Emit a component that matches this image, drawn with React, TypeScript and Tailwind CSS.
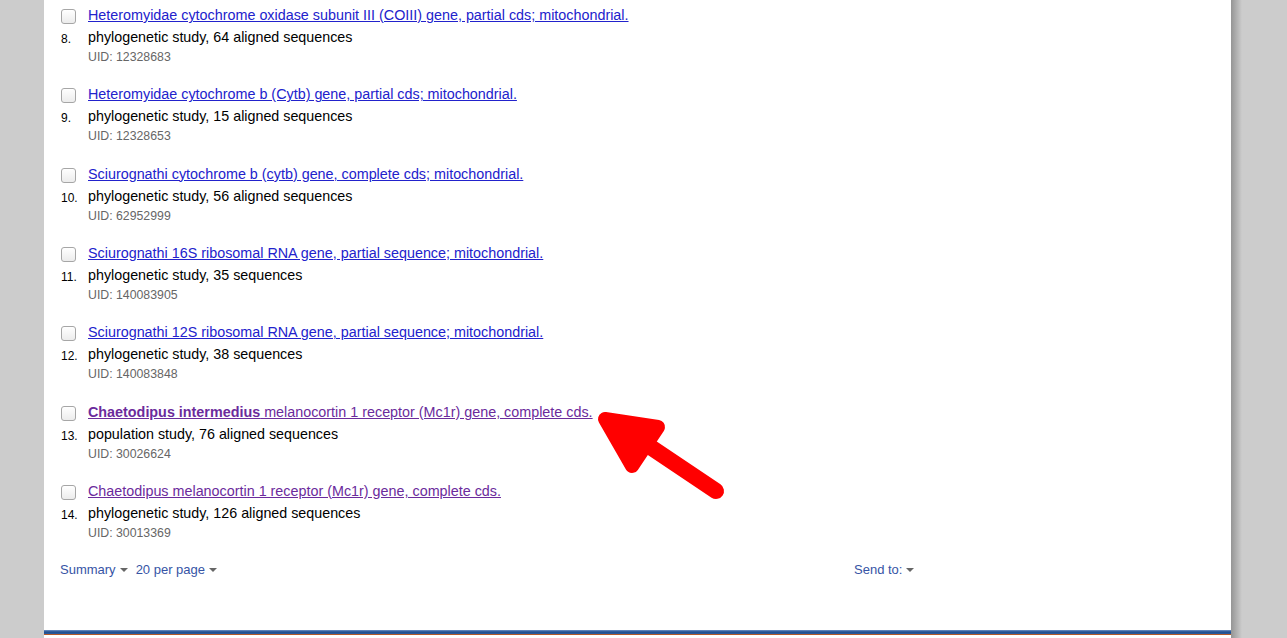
import React from "react";

type Rec = {
  n: number;
  title: React.ReactNode;
  desc: string;
  uid: string;
  visited?: boolean;
};

const recs: Rec[] = [
  { n: 8, title: "Heteromyidae cytochrome oxidase subunit III (COIII) gene, partial cds; mitochondrial.", desc: "phylogenetic study, 64 aligned sequences", uid: "12328683" },
  { n: 9, title: "Heteromyidae cytochrome b (Cytb) gene, partial cds; mitochondrial.", desc: "phylogenetic study, 15 aligned sequences", uid: "12328653" },
  { n: 10, title: "Sciurognathi cytochrome b (cytb) gene, complete cds; mitochondrial.", desc: "phylogenetic study, 56 aligned sequences", uid: "62952999" },
  { n: 11, title: "Sciurognathi 16S ribosomal RNA gene, partial sequence; mitochondrial.", desc: "phylogenetic study, 35 sequences", uid: "140083905" },
  { n: 12, title: "Sciurognathi 12S ribosomal RNA gene, partial sequence; mitochondrial.", desc: "phylogenetic study, 38 sequences", uid: "140083848" },
  {
    n: 13,
    title: (
      <>
        <b>Chaetodipus intermedius</b> melanocortin 1 receptor (Mc1r) gene, complete cds.
      </>
    ),
    desc: "population study, 76 aligned sequences",
    uid: "30026624",
    visited: true,
  },
  { n: 14, title: "Chaetodipus melanocortin 1 receptor (Mc1r) gene, complete cds.", desc: "phylogenetic study, 126 aligned sequences", uid: "30013369", visited: true },
];

function Caret() {
  return <span className="inline-block ml-[4px] mb-[2px] align-middle w-0 h-0 border-l-[4px] border-r-[4px] border-t-[4px] border-l-transparent border-r-transparent border-t-[#666]" />;
}

function Item({ r }: { r: Rec }) {
  return (
    <div className="flex h-[79.333px]">
      <div className="w-[27px] flex flex-col">
        <div className="mt-[4px] w-[15px] h-[15px] rounded-[3px] border border-[#a6a6a6] bg-gradient-to-b from-white to-[#ececec]" />
        <div className="mt-[8px] text-[12px] leading-[14px] text-black">{r.n}.</div>
      </div>
      <div className="flex flex-col">
        <a className={`text-[14.35px] leading-[20px] underline ${r.visited ? "text-[#6b2b9c]" : "text-[#2222cc]"}`}>{r.title}</a>
        <div className="mt-[2px] text-[14.3px] leading-[20px] text-black">{r.desc}</div>
        <div className="text-[12.3px] leading-[20px] text-[#666]">UID: {r.uid}</div>
      </div>
    </div>
  );
}

export default function App() {
  return (
    <div className="relative w-[1287px] h-[638px] overflow-hidden bg-[#cccccc] flex" style={{ fontFamily: '"Liberation Sans", Arial, sans-serif' }}>
      <div className="ml-[44px] w-[1187px] h-[638px] bg-white flex flex-col">
        <div className="pl-[17px] pt-[5px]">
          {recs.map((r) => (
            <Item key={r.n} r={r} />
          ))}
        </div>
        <div className="flex text-[13px] leading-[20px] text-[#3654a5] pl-[16px]">
          <div className="w-[794px] flex">
            <span>
              Summary
              <Caret />
            </span>
            <span className="ml-[8px]">
              20 per page
              <Caret />
            </span>
          </div>
          <span>
            Send to:
            <Caret />
          </span>
        </div>
        <div className="mt-auto mb-[3px]">
          <div className="h-[4px] bg-gradient-to-b from-[#6f93c6] via-[#1c4d8e] to-[#2d5d9c]" />
          <div className="h-[1px] bg-[#b35a2a]" />
        </div>
      </div>
      <div className="w-[11px] h-[638px] bg-gradient-to-r from-[#959595] to-[#cccccc]" />
      <svg className="absolute inset-0 pointer-events-none" width="1287" height="638" viewBox="0 0 1287 638">
        <polygon points="605,419 658,427 632,466" fill="#ff0000" stroke="#ff0000" strokeWidth="14" strokeLinejoin="round" />
        <line x1="640" y1="440" x2="716" y2="491" stroke="#ff0000" strokeWidth="16" strokeLinecap="round" />
      </svg>
    </div>
  );
}
